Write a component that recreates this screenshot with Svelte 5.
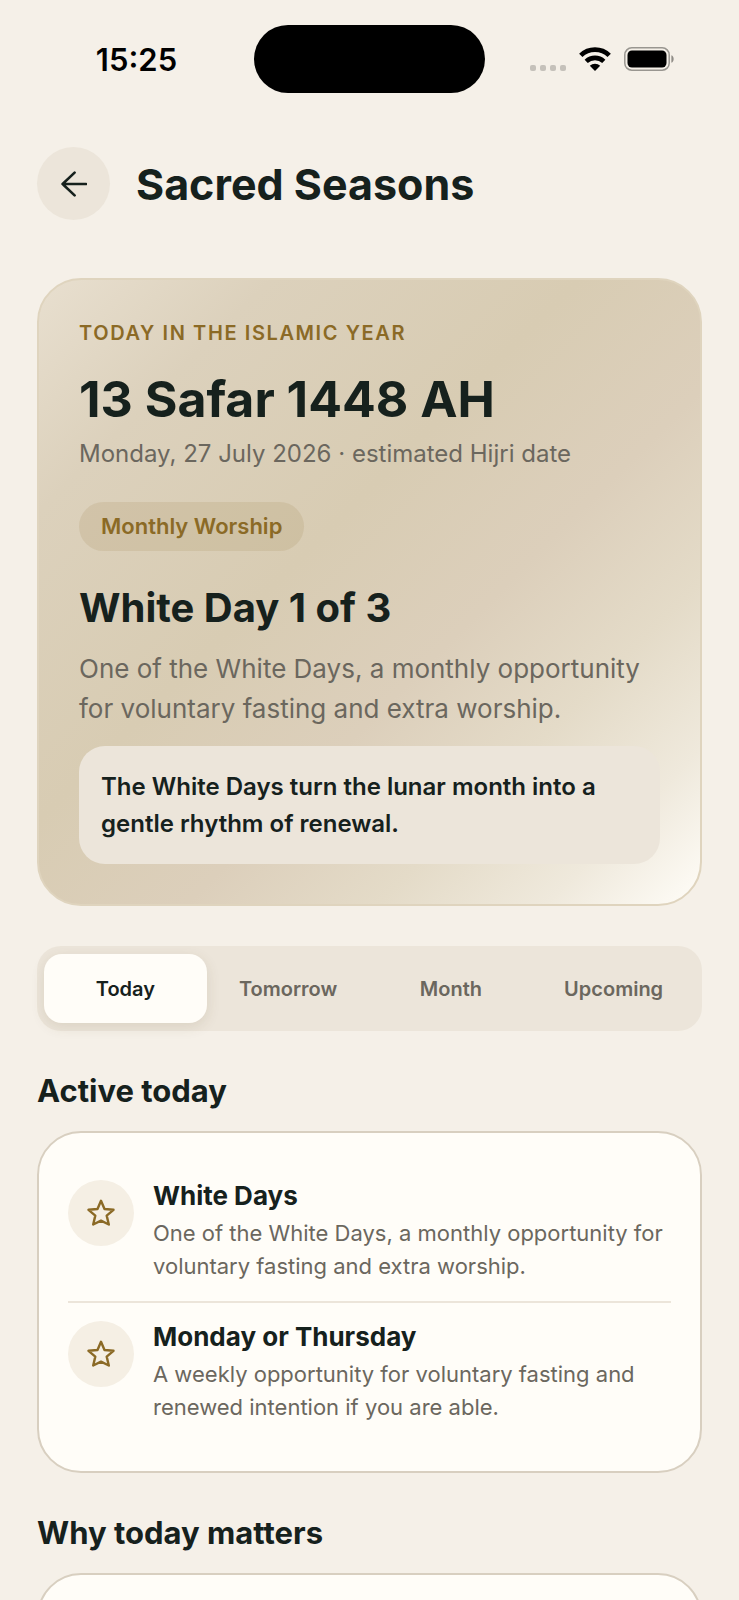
<script lang="ts">
  type Observance = {
    title: string;
    text: string;
  };

  const tabs = ['Today', 'Tomorrow', 'Month', 'Upcoming'];
  let activeTab = $state('Today');

  const observances: Observance[] = [
    {
      title: 'White Days',
      text: 'One of the White Days, a monthly opportunity for voluntary fasting and extra worship.'
    },
    {
      title: 'Monday or Thursday',
      text: 'A weekly opportunity for voluntary fasting and renewed intention if you are able.'
    }
  ];
</script>

<div class="screen">
  <div class="status-bar">
    <span class="time">15:25</span>
    <div class="island"></div>
    <div class="indicators">
      <div class="signal"><i></i><i></i><i></i><i></i></div>
      <svg class="wifi" width="32" height="24" viewBox="0 0 32 24" aria-hidden="true">
        <path d="M1.8 8.4a20.4 20.4 0 0 1 28.4 0" fill="none" stroke="#000" stroke-width="4.8" />
        <path d="M7.2 14.4a12.8 12.8 0 0 1 17.6 0" fill="none" stroke="#000" stroke-width="4.6" />
        <path d="M16 24l-5.2-5.2a7.6 7.6 0 0 1 10.4 0z" />
      </svg>
      <svg class="battery" width="50" height="24" viewBox="0 0 50 24" aria-hidden="true">
        <rect x="0.8" y="0.8" width="44.4" height="22.4" rx="7" fill="none" stroke="#999690" stroke-width="1.5" />
        <rect x="3.5" y="3.5" width="39" height="17" rx="4.5" />
        <path d="M47.4 8.2c3 1.2 3 6.4 0 7.6z" fill="#8f8c86" />
      </svg>
    </div>
  </div>

  <header>
    <button class="back" aria-label="Back">
      <svg width="26" height="26" viewBox="0 0 26 26" aria-hidden="true">
        <path d="M25 13H1.6M13.6 1.6L1.6 13l12 11.4" />
      </svg>
    </button>
    <h1>Sacred Seasons</h1>
  </header>

  <main>
    <section class="hero">
      <p class="eyebrow">TODAY IN THE ISLAMIC YEAR</p>
      <p class="hijri">13 Safar 1448 AH</p>
      <p class="date">Monday, 27 July 2026 · estimated Hijri date</p>
      <span class="badge">Monthly Worship</span>
      <h2>White Day 1 of 3</h2>
      <p class="summary">One of the White Days, a monthly opportunity for voluntary fasting and extra worship.</p>
      <p class="quote">The White Days turn the lunar month into a gentle rhythm of renewal.</p>
    </section>

    <nav class="tabs">
      {#each tabs as tab}
        <button class:active={tab === activeTab} onclick={() => (activeTab = tab)}>{tab}</button>
      {/each}
    </nav>

    <h3>Active today</h3>
    <ul class="card">
      {#each observances as item}
        <li>
          <div class="icon">
            <svg width="28" height="28" viewBox="0 0 28 28" aria-hidden="true">
              <path d="M14 1.8l3.5 8.2 9 .8-6.8 5.8 2.1 8.9-7.8-3.9-7.8 3.9 2.1-8.9-6.8-5.8 9-.8z" />
            </svg>
          </div>
          <div class="body">
            <h4>{item.title}</h4>
            <p>{item.text}</p>
          </div>
        </li>
      {/each}
    </ul>

    <h3>Why today matters</h3>
    <div class="card why"></div>
  </main>
</div>

<style>
  :global(body) {
    background: #f5f0e8;
  }

  .screen {
    --text: #16211d;
    --muted: #6b675e;
    --gold: #8b6a26;
    --surface: #fffdf8;
    --soft: #ece5da;
    --border: #d8cfc0;
    box-sizing: border-box;
    height: 100vh;
    overflow: hidden;
    padding: 0 37px;
    background: #f5f0e8;
    color: var(--text);
    font-family: Inter, "Liberation Sans", sans-serif;
  }

  h1, h2, h3, h4, p, ul {
    margin: 0;
  }

  button {
    border: 0;
    padding: 0;
    font-family: inherit;
    cursor: pointer;
  }

  .status-bar {
    display: grid;
    grid-template-columns: 1fr 231px 1fr;
    align-items: center;
    height: 68px;
    padding-top: 25px;
    color: #000;
  }

  .time {
    justify-self: center;
    margin-right: 18px;
    font-size: 31px;
    font-weight: 600;
  }

  .island {
    height: 68px;
    border-radius: 34px;
    background: #000;
  }

  .indicators {
    display: flex;
    align-items: center;
    justify-content: flex-end;
    gap: 13px;
    padding-right: 28px;
  }

  .signal {
    display: flex;
    gap: 4px;
    padding-top: 17px;
  }

  .signal i {
    width: 6px;
    height: 6px;
    border-radius: 2px;
    background: #c5c1ba;
  }

  header {
    display: flex;
    align-items: center;
    gap: 26px;
    margin: 54px 0 58px;
  }

  .back {
    display: grid;
    place-items: center;
    width: 73px;
    height: 73px;
    border-radius: 50%;
    background: var(--soft);
  }

  .back svg {
    fill: none;
    stroke: var(--text);
    stroke-width: 2.6;
    stroke-linecap: round;
    stroke-linejoin: round;
  }

  h1 {
    font-size: 43px;
    line-height: 54px;
    font-weight: 700;
  }

  .hero {
    border: 2px solid #dfd4be;
    border-radius: 44px;
    padding: 40px;
    background: linear-gradient(135deg, #e8dfcf 0%, #dcd1bc 18%, #d8ccb3 42%, #dccfbb 60%, #e4dbc8 75%, #efe9dc 88%, #fffdf8 100%);
  }

  .eyebrow {
    color: var(--gold);
    font-size: 20px;
    line-height: 26px;
    font-weight: 600;
    letter-spacing: 0.08em;
  }

  .hijri {
    margin-top: 21px;
    font-size: 50px;
    line-height: 64px;
    font-weight: 700;
  }

  .date {
    margin-top: 8px;
    color: var(--muted);
    font-size: 24px;
    line-height: 30px;
  }

  .badge {
    display: inline-block;
    margin-top: 33px;
    padding: 11px 22px;
    border-radius: 25px;
    background: rgba(139, 106, 38, 0.12);
    color: var(--gold);
    font-size: 22px;
    line-height: 27px;
    font-weight: 600;
  }

  h2 {
    margin-top: 31px;
    font-size: 40px;
    line-height: 52px;
    font-weight: 700;
  }

  .summary {
    margin-top: 15px;
    color: var(--muted);
    font-size: 26px;
    line-height: 40px;
  }

  .quote {
    margin-top: 17px;
    padding: 22px;
    border-radius: 26px;
    background: var(--soft);
    font-size: 24px;
    line-height: 37px;
    font-weight: 600;
  }

  .tabs {
    display: flex;
    margin-top: 40px;
    padding: 8px 7px;
    border-radius: 24px;
    background: var(--soft);
  }

  .tabs button {
    flex: 1;
    height: 69px;
    border-radius: 18px;
    background: none;
    color: var(--muted);
    font-size: 20px;
    font-weight: 600;
  }

  .tabs .active {
    background: var(--surface);
    color: var(--text);
    box-shadow: 0 4px 14px rgba(90, 70, 30, 0.12);
  }

  h3 {
    margin: 40px 0 20px;
    font-size: 31px;
    line-height: 40px;
    font-weight: 700;
  }

  .card {
    border: 2px solid var(--border);
    border-radius: 44px;
    padding: 29px;
    background: var(--surface);
    list-style: none;
  }

  .card li {
    display: flex;
    gap: 19px;
    padding: 18px 0;
  }

  .card li + li {
    border-top: 2px solid var(--soft);
  }

  .icon {
    display: grid;
    place-items: center;
    flex: none;
    width: 66px;
    height: 66px;
    border-radius: 50%;
    background: #f5efe4;
  }

  .icon svg {
    fill: none;
    stroke: var(--gold);
    stroke-width: 2.4;
    stroke-linejoin: round;
  }

  .body h4 {
    margin-bottom: 5px;
    font-size: 26px;
    line-height: 32px;
    font-weight: 700;
  }

  .body p {
    color: var(--muted);
    font-size: 22px;
    line-height: 33px;
  }

  .why {
    min-height: 200px;
  }
</style>
